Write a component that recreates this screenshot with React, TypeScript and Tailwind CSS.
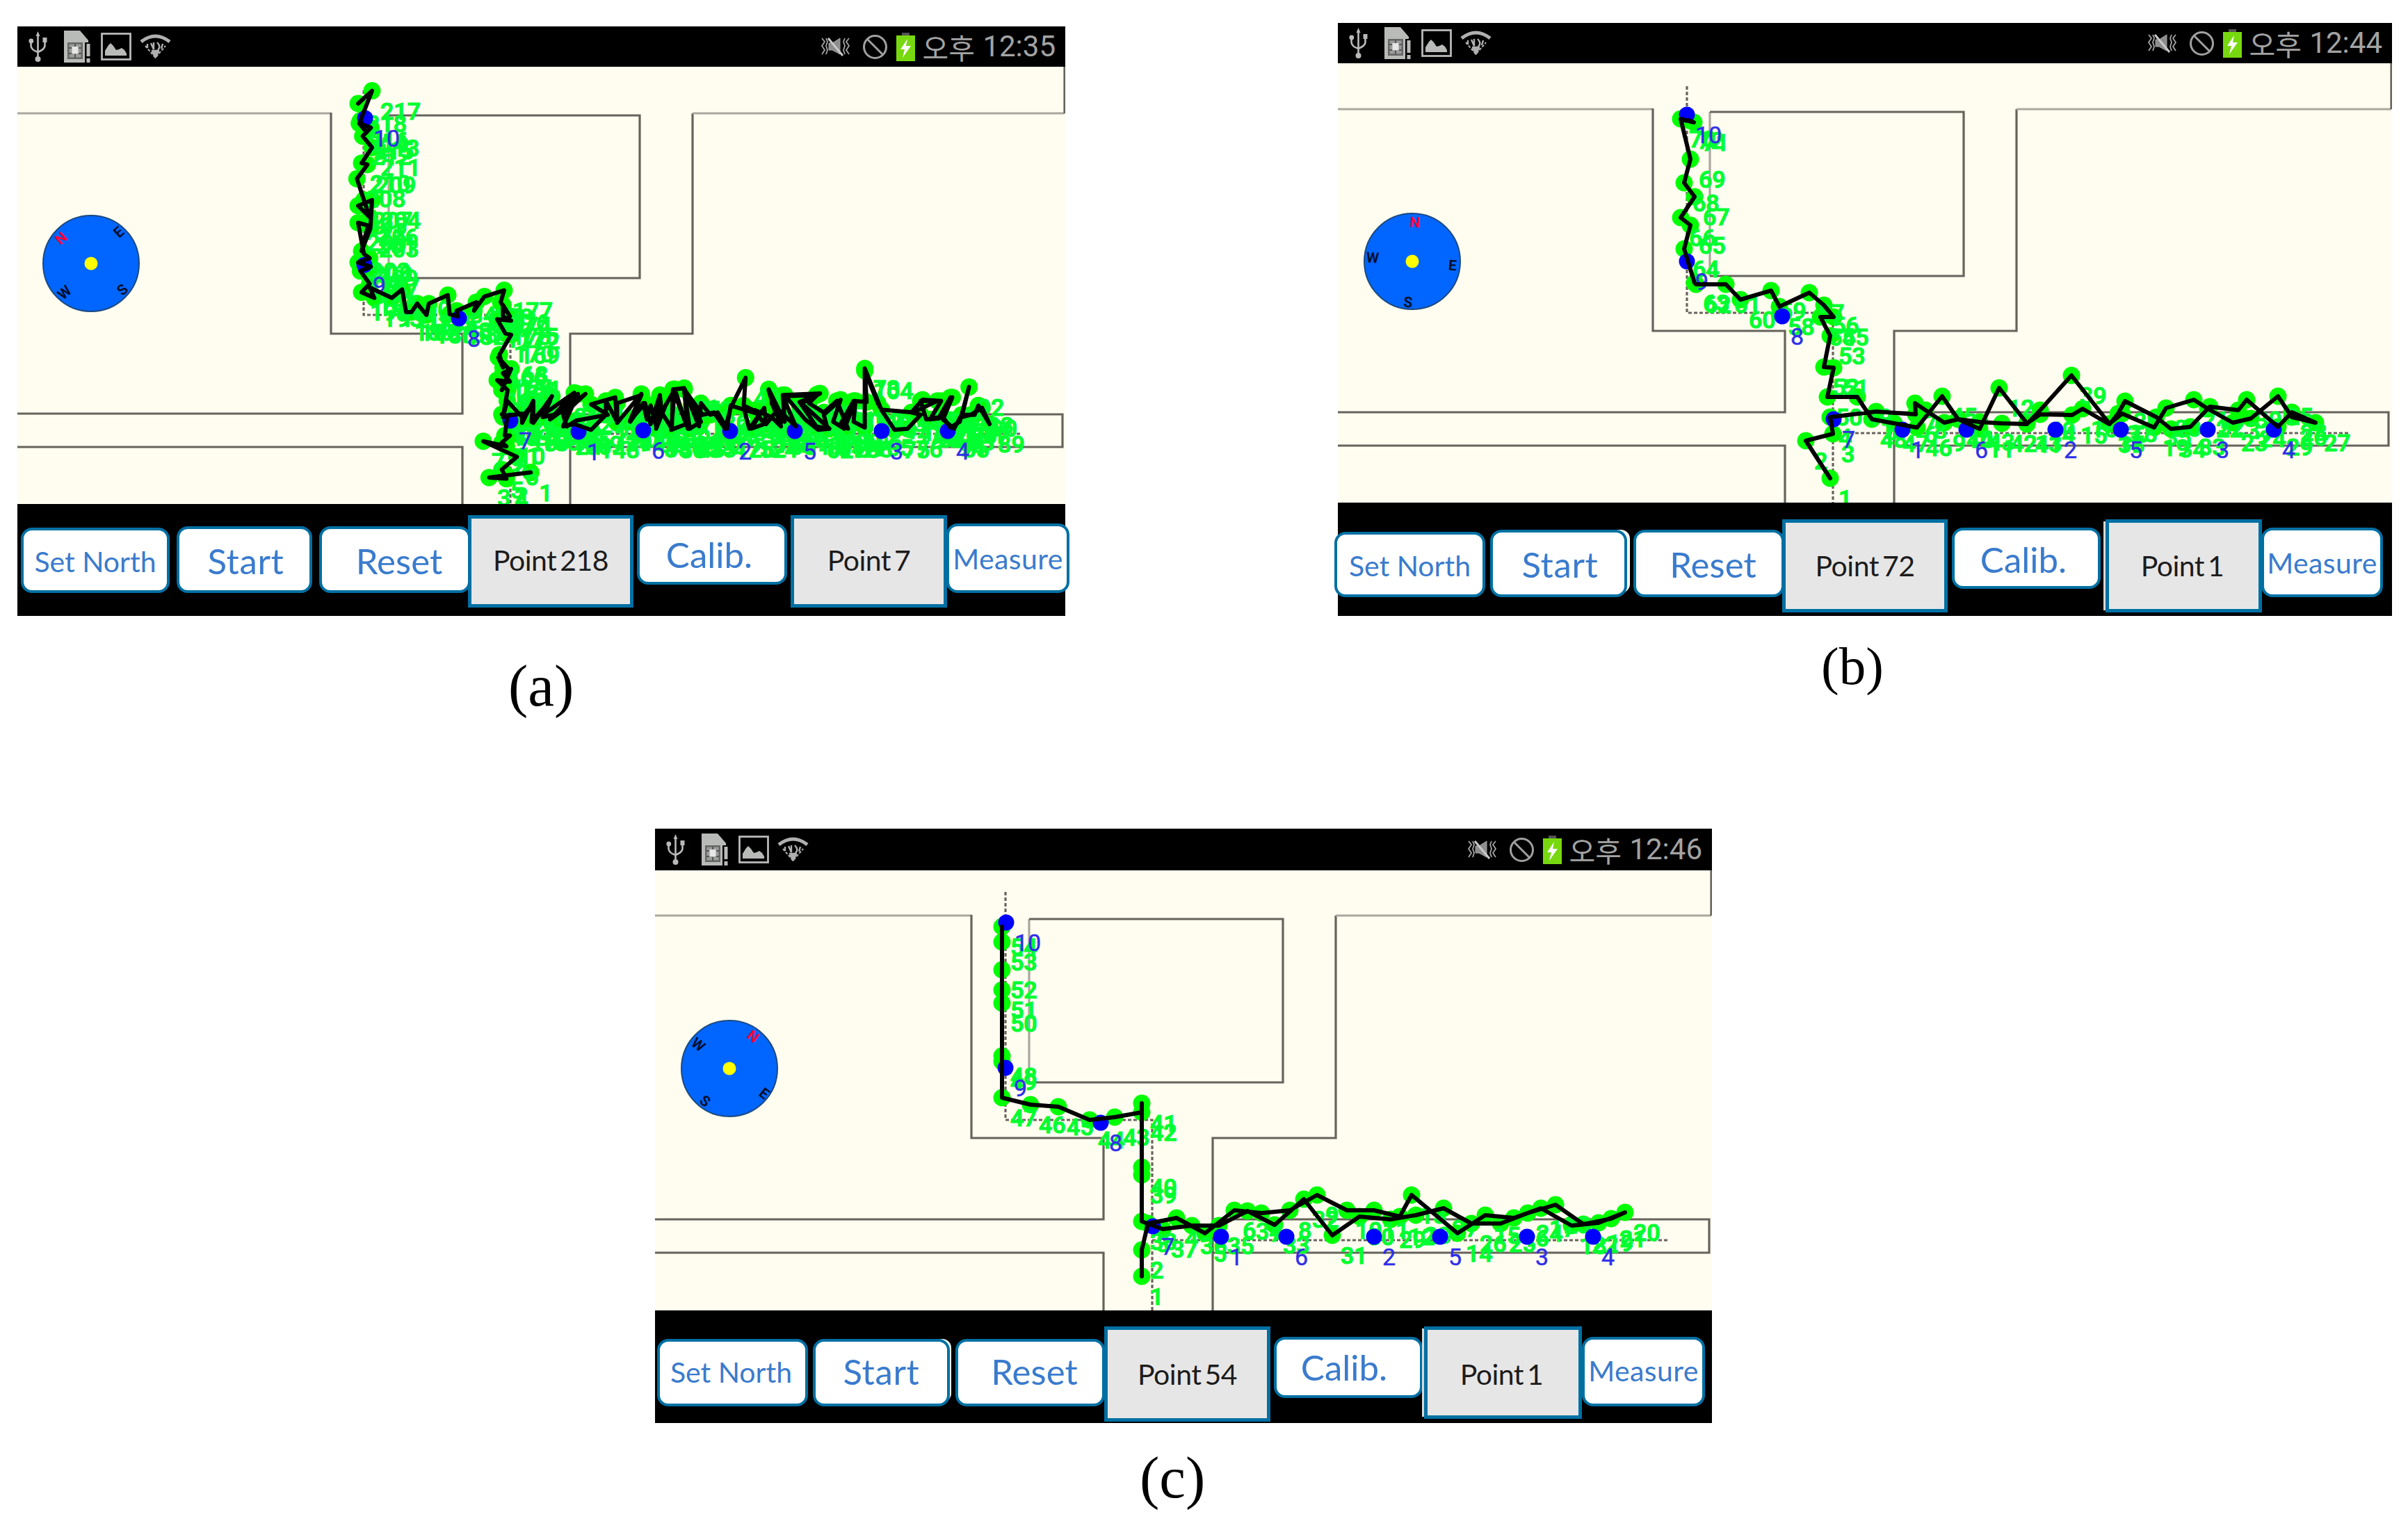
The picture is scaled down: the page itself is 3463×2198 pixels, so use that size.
import clsx from "clsx";

type Point = [number, number];

interface Wall {
  d: string;
  light?: boolean;
}

interface MapData {
  viewBox: string;
  walls: Wall[];
  dashed: string;
  track: Point[];
  count: number;
  beacons: [string, number, number][];
  compass: { x: number; y: number; angle: number; letters: [string, number, number][] };
}

interface BarButton {
  label: string;
  className: string;
}

// Section coordinates -> map coordinates
const section = (x0: number, y0: number, kx: number, ky: number, pts: Point[]): Point[] =>
  pts.map(([x, y]) => [x0 + x / kx, y0 + y / ky]);

const trackA: Point[] = [
  ...section(440, 100, 3, 2.45, [
    [970, 1420], [865, 1430], [790, 1438], [865, 1442], [845, 1410], [910, 1365], [765, 1310],
    [865, 1328], [845, 1315], [880, 1290], [858, 1290], [868, 1225], [845, 1215],
  ]),
  ...section(700, 480, 1.867, 3, [
    [50, 355], [95, 345], [95, 385], [125, 290], [125, 385], [175, 270], [150, 350], [235, 255],
    [170, 370], [265, 260], [205, 350], [215, 400], [240, 375], [325, 350], [280, 305], [345, 275],
    [350, 385], [415, 260], [385, 375], [425, 300], [440, 390], [465, 265], [455, 410], [480, 310],
    [505, 240], [495, 415], [535, 390], [505, 240], [530, 235], [575, 380], [545, 410], [530, 240],
    [580, 350], [610, 340], [640, 410], [655, 320], [695, 190], [690, 310], [735, 345], [710, 410],
    [745, 390], [720, 330], [765, 360], [790, 400], [757, 240], [800, 380], [795, 265], [895, 258],
    [845, 300], [920, 410], [890, 415], [855, 370], [800, 265], [890, 260], [865, 300], [905, 340],
    [940, 290], [970, 410], [950, 390], [985, 290], [1020, 295], [1015, 150], [1060, 330],
    [1095, 415], [1130, 410], [1165, 350], [1140, 340], [1170, 285], [1220, 290], [1190, 370],
    [1215, 365], [1250, 275], [1225, 370], [1255, 410], [1275, 350], [1310, 350], [1320, 310],
    [1350, 390], [1330, 320], [1300, 350], [1275, 360], [1295, 230], [1270, 380], [1245, 405],
    [1225, 360], [1245, 275], [1215, 360], [1180, 370], [1165, 290], [1210, 290], [1145, 340],
    [1060, 328], [1050, 300], [1015, 160], [1015, 405], [985, 380], [990, 290], [960, 410],
    [930, 380], [950, 285], [905, 350], [915, 410], [885, 400], [840, 295], [885, 265], [795, 270],
    [830, 400], [765, 300], [790, 385], [757, 245], [775, 340], [750, 390], [745, 320], [705, 410],
    [690, 320], [725, 345], [655, 310], [645, 410], [620, 340], [600, 350], [575, 300], [570, 400],
    [530, 240], [540, 410], [500, 240], [497, 410], [470, 340], [465, 270], [455, 400], [440, 310],
    [430, 370], [420, 300], [385, 380], [415, 265], [350, 300], [350, 380], [320, 290], [320, 350],
    [280, 415], [235, 390], [205, 400], [245, 260], [180, 350], [150, 360], [170, 290], [120, 380],
    [125, 300], [95, 360], [55, 290],
  ]),
  ...section(440, 100, 3, 2.45, [
    [850, 1225], [870, 1130], [825, 1095], [880, 1100], [850, 1070], [885, 1055], [845, 1130],
    [880, 1060], [830, 1015], [850, 1050], [835, 1005], [885, 935], [860, 930], [825, 880],
    [885, 885], [850, 870], [850, 830], [880, 870], [840, 820], [855, 778], [770, 800], [725, 850],
    [735, 820], [650, 850], [655, 870], [620, 862], [612, 795], [530, 825], [520, 865], [480, 825],
    [455, 855], [432, 855], [415, 775], [370, 805], [275, 768], [295, 805], [240, 785], [275, 755],
    [235, 710], [280, 695], [225, 680], [275, 665], [250, 650], [225, 540], [268, 550], [240, 640],
    [278, 560], [285, 460], [225, 480], [275, 520], [250, 460], [220, 385], [265, 335], [240, 330],
    [285, 275], [245, 235], [280, 205], [230, 190], [255, 215], [235, 180], [285, 75], [225, 120],
  ]),
];

const trackB: Point[] = [
  [2632, 688], [2597, 634], [2636, 624], [2632, 600], [2698, 592], [2755, 596], [2754, 580],
  [2769, 590], [2796, 608], [2816, 603], [2847, 617], [2875, 558], [2915, 609], [2934, 596],
  [2980, 597], [2995, 588], [3033, 610], [3052, 595], [3098, 615], [3115, 587], [3155, 575],
  [3175, 588], [3211, 608], [3237, 602], [3276, 570], [3296, 600], [3330, 608], [3296, 593],
  [3276, 614], [3231, 575], [3219, 590], [3178, 585], [3150, 614], [3122, 617], [3101, 600],
  [3056, 577], [3046, 595], [3034, 610], [2979, 540], [2934, 590], [2915, 610], [2879, 609],
  [2847, 607], [2816, 603], [2793, 570], [2757, 615], [2724, 609], [2692, 603], [2671, 571],
  [2628, 571], [2637, 529], [2623, 528], [2632, 483], [2618, 456], [2637, 456], [2623, 439],
  [2602, 421], [2559, 441], [2547, 418], [2503, 431], [2482, 409], [2439, 409], [2437, 407],
  [2422, 358], [2431, 324], [2417, 313], [2437, 283], [2422, 263], [2431, 229], [2417, 171],
  [2436, 176], [2429, 173],
];

const trackC: Point[] = [
  [1642, 1836], [1642, 1798], [1651, 1760], [1692, 1752], [1733, 1774], [1775, 1741], [1814, 1745],
  [1855, 1741], [1894, 1719], [1937, 1741], [1976, 1741], [2013, 1750], [2030, 1719], [2096, 1774],
  [2136, 1748], [2177, 1752], [2216, 1738], [2260, 1763], [2299, 1759], [2337, 1744], [2317, 1753],
  [2277, 1761], [2237, 1733], [2197, 1745], [2158, 1760], [2116, 1760], [2076, 1738], [2036, 1748],
  [2000, 1754], [1955, 1750], [1916, 1777], [1875, 1725], [1833, 1762], [1794, 1742], [1753, 1763],
  [1714, 1763], [1672, 1768], [1642, 1757], [1642, 1690], [1642, 1679], [1642, 1587], [1642, 1600],
  [1603, 1607], [1567, 1611], [1522, 1592], [1482, 1589], [1441, 1579], [1441, 1519], [1441, 1527],
  [1441, 1443], [1441, 1424], [1441, 1395], [1441, 1355], [1441, 1333],
];

const mapA: MapData = {
  viewBox: "25 96 1507 629",
  walls: [
    { d: "M25 163H476", light: true },
    { d: "M476 162V480H665V595H25" },
    { d: "M25 643H665V725" },
    { d: "M820 725V480H996V163" },
    { d: "M996 163H1531", light: true },
    { d: "M1531 96V163" },
    { d: "M820 596H1528V643H820" },
    { d: "M559 166V400", light: true },
    { d: "M559 166H920V400H559" },
  ],
  dashed: "M523 130V453H734V725M734 624H1470",
  track: trackA,
  count: 218,
  beacons: [
    ["10", 525, 170], ["9", 524, 381], ["8", 660, 458], ["7", 734, 605], ["1", 832, 621],
    ["6", 925, 619], ["2", 1050, 620], ["5", 1143, 620], ["3", 1268, 620], ["4", 1363, 620],
  ],
  compass: {
    x: 131, y: 379, angle: -42,
    letters: [["N", 88, 343], ["E", 171, 334], ["S", 176, 417], ["W", 93, 421]],
  },
};

const mapB: MapData = {
  viewBox: "1924 91 1516 632",
  walls: [
    { d: "M1924 157H2377", light: true },
    { d: "M2377 156V476H2567V593H1924" },
    { d: "M1924 641H2567V723" },
    { d: "M2724 723V476H2900V157" },
    { d: "M2900 157H3439", light: true },
    { d: "M3439 91V157" },
    { d: "M2724 593H3435V641H2724" },
    { d: "M2459 161V397", light: true },
    { d: "M2459 161H2824V397H2459" },
  ],
  dashed: "M2426 124V450H2636V723M2636 623H3378",
  track: trackB,
  count: 72,
  beacons: [
    ["10", 2426, 165], ["9", 2426, 376], ["8", 2563, 455], ["7", 2637, 603], ["1", 2736, 618],
    ["6", 2828, 618], ["2", 2956, 618], ["5", 3050, 618], ["3", 3175, 618], ["4", 3270, 618],
  ],
  compass: {
    x: 2031, y: 376, angle: 4,
    letters: [["N", 2035, 320], ["E", 2089, 382], ["S", 2025, 435], ["W", 1974, 371]],
  },
};

const mapC: MapData = {
  viewBox: "942 1252 1520 633",
  walls: [
    { d: "M942 1317H1397", light: true },
    { d: "M1397 1316V1637H1587V1754H942" },
    { d: "M942 1802H1587V1885" },
    { d: "M1744 1885V1637H1921V1317" },
    { d: "M1921 1317H2461", light: true },
    { d: "M2461 1252V1317" },
    { d: "M1744 1754H2458V1802H1744" },
    { d: "M1480 1322V1557", light: true },
    { d: "M1480 1322H1845V1557H1480" },
  ],
  dashed: "M1446 1283V1611H1657V1885M1657 1784H2399",
  track: trackC,
  count: 54,
  beacons: [
    ["10", 1447, 1327], ["9", 1446, 1536], ["8", 1583, 1615], ["7", 1658, 1764], ["1", 1756, 1779],
    ["6", 1850, 1779], ["2", 1976, 1779], ["5", 2071, 1779], ["3", 2196, 1779], ["4", 2291, 1779],
  ],
  compass: {
    x: 1049, y: 1537, angle: 38,
    letters: [["N", 1083, 1491], ["E", 1099, 1573], ["S", 1014, 1584], ["W", 1004, 1503]],
  },
};

const outlined =
  "rounded-[16px] border-[4px] border-[#0070a3] bg-white text-[#3a7bcd]";
const small = "text-[41px]";
const large = "text-[51px]";
const boxed =
  "border-[5px] border-[#0070a3] bg-[#e7e6e6] text-[#1c1c1c] text-[41px] tracking-[-0.5px] [word-spacing:-5px]";

const buttonsA: BarButton[] = [
  { label: "Set North", className: clsx(outlined, small, "ml-[5px] mt-[34px] h-[94px] w-[214px] pt-0.5") },
  { label: "Start", className: clsx(outlined, large, "ml-[10px] mt-8 h-24 w-[195px] pt-0.5 pl-1 tracking-[0.6px]") },
  { label: "Reset", className: clsx(outlined, large, "ml-[10px] mt-8 h-24 w-[218px] pt-0.5 pl-3") },
  { label: "Point 218", className: clsx(boxed, "-ml-1 mt-4 h-[133px] w-[238px] pb-1") },
  { label: "Calib.", className: clsx(outlined, large, "ml-[5px] mt-7 h-[88px] w-[216px] pr-2") },
  { label: "Point 7", className: clsx(boxed, "ml-[5px] mt-4 h-[133px] w-[225px] pb-1") },
  { label: "Measure", className: clsx(outlined, small, "-ml-px mt-7 h-[100px] w-[177px] tracking-[0.4px]") },
];

const buttonsB: BarButton[] = [
  { label: "Set North", className: clsx(outlined, small, "-ml-[5px] mt-[42px] h-[94px] w-[217px] pt-0.5") },
  { label: "Start", className: clsx(outlined, large, "ml-[7px] mt-[39px] h-[97px] w-[197px] pt-0.5 pl-1 tracking-[0.6px] shadow-[7px_-3px_0_-3px_white]") },
  { label: "Reset", className: clsx(outlined, large, "ml-[9px] mt-[39px] h-[97px] w-[217px] pt-0.5 pl-3") },
  { label: "Point 72", className: clsx(boxed, "-ml-[3px] mt-6 h-[134px] w-[238px] pb-0.5") },
  { label: "Calib.", className: clsx(outlined, large, "ml-1.5 mt-9 h-[88px] w-[214px] pt-0.5 pr-2") },
  { label: "Point 1", className: clsx(boxed, "ml-[7px] mt-6 h-[134px] w-[225px] pb-0.5 pr-1 shadow-[-6px_0_0_-3px_#d8d8d8]") },
  { label: "Measure", className: clsx(outlined, small, "-ml-px mt-9 h-[100px] w-[175px] tracking-[0.4px]") },
];

const buttonsC: BarButton[] = [
  { label: "Set North", className: clsx(outlined, small, "ml-[3px] mt-[41px] h-[97px] w-[217px] pb-0.5 pr-1") },
  { label: "Start", className: clsx(outlined, large, "ml-[7px] mt-[41px] h-[97px] w-[197px] pb-1 tracking-[0.6px] shadow-[5px_-3px_0_-3px_white]") },
  { label: "Reset", className: clsx(outlined, large, "ml-2 mt-[41px] h-[97px] w-[215px] pb-1 pl-3") },
  { label: "Point 54", className: clsx(boxed, "-ml-px mt-[23px] h-[137px] w-[239px]") },
  { label: "Calib.", className: clsx(outlined, large, "ml-[5px] mt-[38px] h-[88px] w-[214px] pb-0.5 pr-3") },
  { label: "Point 1", className: clsx(boxed, "ml-0.5 mt-[23px] h-[133px] w-[227px] pt-1 pr-1 shadow-[-6px_0_0_-3px_#d8d8d8]") },
  { label: "Measure", className: clsx(outlined, small, "mt-[38px] h-[100px] w-[177px] pb-1 tracking-[0.4px]") },
];

function UsbIcon() {
  return (
    <svg viewBox="0 0 27 46" className="h-[46px] w-[27px]" fill="#b9b9b9" stroke="#b9b9b9">
      <path d="M13.5 6V40M3.5 16V22Q4 28 13.5 31M23.5 14V22Q23 27 13.5 31" fill="none" strokeWidth="2.600" />
      <path d="M13.5 1l3 7h-6z" stroke="none" />
      <circle cx="3.800" cy="15" r="3.400" stroke="none" />
      <rect x="20.500" y="10" width="6" height="7" stroke="none" />
      <circle cx="13.500" cy="41" r="4" stroke="none" />
    </svg>
  );
}

function SimIcon() {
  return (
    <svg viewBox="0 0 40 48" className="h-12 w-10">
      <path d="M1 1H24L36 15V18H31V47H1Z" fill="#b9bbb8" />
      <rect x="6" y="18" width="22" height="24" fill="#666" />
      <rect x="8.500" y="20.500" width="17" height="19" fill="#9a9c99" />
      <path d="M17 20v4M17 35v5M8 26h4M8 34h4M22 26h4M22 34h4" stroke="#555" strokeWidth="2" />
      <rect x="12.500" y="24" width="9" height="10" fill="#e6e6e6" />
      <path d="M36 20V38M36 41V47" stroke="#b9bbb8" strokeWidth="5" />
    </svg>
  );
}

function PictureIcon() {
  return (
    <svg viewBox="0 0 44 40" className="h-10 w-11">
      <rect x="1.500" y="1.500" width="41" height="37" fill="none" stroke="#b9b9b9" strokeWidth="2.800" />
      <path d="M6 33V26L11 18L14 15L18 19L22 25L26 24L30 22L34 25L37 30V33Z" fill="#b9bbb8" />
    </svg>
  );
}

function WifiIcon() {
  return (
    <svg viewBox="0 0 45 36" className="h-9 w-[45px]" fill="none" stroke="#b0b0b0">
      <path d="M2 11Q22.500 -5 43 11" strokeWidth="5" />
      <path d="M8 17L22.500 34L37 17" strokeWidth="2" strokeDasharray="4 2" />
      <path d="M11 14V20M16 13L20 22V12M25 12Q31 18 26 23M33 14L31 21M17 24H28" strokeWidth="2.400" />
      <path d="M17 25L22.500 35L28 25" fill="#b0b0b0" strokeWidth="1" />
    </svg>
  );
}

function MuteIcon() {
  return (
    <svg viewBox="0 0 43 32" className="h-8 w-[43px]" fill="none" stroke="#a5a5a5">
      <path d="M2 4l4 5-4 6 4 6-4 6M8 4l2 5-2 6 2 6-2 6M41 4l-4 5 4 6-4 6 4 6M35 4l-2 5 2 6-2 6 2 6" strokeWidth="1.800" />
      <path d="M12 11H17L28 4V27L17 21H12Z" fill="#8c8c8c" strokeWidth="1" />
      <path d="M11 4L32 29" stroke="#c9c9c9" strokeWidth="3" />
    </svg>
  );
}

function BlockIcon() {
  return (
    <svg viewBox="0 0 37 37" className="size-[37px]" fill="none" stroke="#a0a0a0" strokeWidth="3">
      <circle cx="18.500" cy="18.500" r="16" />
      <path d="M7.500 7.500L29.500 29.500" />
    </svg>
  );
}

function BatteryIcon() {
  return (
    <svg viewBox="0 0 27 41" className="h-[41px] w-[27px]">
      <rect x="8" y="0" width="11" height="5" fill="#555" />
      <rect x="0" y="4" width="27" height="37" fill="#77d810" />
      <path d="M16 9L6 24H12L9 36L21 19H14Z" fill="white" />
    </svg>
  );
}

function StatusBar({ time, className }: { time: string; className: string }) {
  return (
    <div className={clsx("flex items-center justify-between bg-black pl-4 pr-[14px]", className)}>
      <div className="flex items-center">
        <UsbIcon />
        <div className="ml-[23px]"><SimIcon /></div>
        <div className="ml-[14px]"><PictureIcon /></div>
        <div className="ml-3"><WifiIcon /></div>
      </div>
      <div className="flex items-center">
        <MuteIcon />
        <div className="ml-[17px]"><BlockIcon /></div>
        <div className="ml-3"><BatteryIcon /></div>
        <div className="ml-2.5 flex items-center leading-none text-[#a3a3a3]">
          <span className="w-[87px] font-['Noto_Sans_CJK_KR',sans-serif] text-[41px]">오후</span>
          <span className="font-[Roboto,sans-serif] text-[42px]">{time}</span>
        </div>
      </div>
    </div>
  );
}

function FloorMap({ map, className }: { map: MapData; className: string }) {
  const last = map.track.length - 1;
  const line = map.track.map((p) => p.join(",")).join(" ");
  return (
    <svg viewBox={map.viewBox} className={clsx("block bg-[#fffdf0] font-[Roboto,sans-serif]", className)}>
      <g fill="none" strokeWidth="3.200">
        {map.walls.map((wall) => (
          <path key={wall.d} d={wall.d} stroke={wall.light ? "#aaa79f" : "#66635c"} />
        ))}
        <path d={map.dashed} stroke="#6a645e" strokeDasharray="5 3" />
      </g>

      {/* Compass */}
      <circle cx={map.compass.x} cy={map.compass.y} r="69" fill="#0066ff" stroke="#1c4a80" strokeWidth="2" />
      <circle cx={map.compass.x} cy={map.compass.y} r="9.500" fill="#ffff00" />
      {map.compass.letters.map(([letter, x, y]) => (
        <text
          key={letter}
          x={x}
          y={y + 7}
          textAnchor="middle"
          fontSize="21"
          fontWeight="700"
          fill={letter === "N" ? "#ff0033" : "#001030"}
          transform={`rotate(${map.compass.angle} ${x} ${y})`}
        >
          {letter}
        </text>
      ))}

      {/* Estimated positions */}
      <g fill="#00ff00">
        {map.track.map(([x, y], i) => (
          <circle key={i} cx={x} cy={y} r="12.500" />
        ))}
      </g>
      <g fill="#00ff30" stroke="#00ff30" strokeWidth="1.200" fontSize="34" fontWeight="500">
        {map.track.map(([x, y], i) => (
          <text key={i} x={x + 12} y={y + 41}>
            {1 + Math.round((i * (map.count - 1)) / last)}
          </text>
        ))}
      </g>

      {/* Reference points */}
      {map.beacons.map(([name, x, y]) => (
        <g key={name}>
          <circle cx={x} cy={y} r="11.500" fill="#0000ff" />
          <text x={x + 12} y={y + 41} fontSize="34" fill="#2f2fe8" stroke="#2f2fe8" strokeWidth="0.500">
            {name}
          </text>
        </g>
      ))}
      <polyline points={line} fill="none" stroke="black" strokeWidth="6" strokeLinejoin="round" strokeLinecap="round" />
    </svg>
  );
}

function ButtonBar({ buttons, className }: { buttons: BarButton[]; className: string }) {
  return (
    <div className={clsx("flex items-start bg-black font-[Lato,sans-serif]", className)}>
      {buttons.map((button) => (
        <button
          key={button.label}
          className={clsx("flex shrink-0 items-center justify-center whitespace-nowrap leading-none", button.className)}
        >
          {button.label}
        </button>
      ))}
    </div>
  );
}

export default function App() {
  return (
    <main className="h-[2198px] w-[3463px] overflow-hidden bg-white">
      <div className="flex h-[1192px] items-start pl-[25px]">
        <figure className="w-[1507px] pt-[38px]">
          <StatusBar time="12:35" className="h-[58px]" />
          <FloorMap map={mapA} className="h-[629px] w-[1507px]" />
          <ButtonBar buttons={buttonsA} className="h-[161px]" />
          <figcaption className="mt-[52px] pl-[706px] font-['Liberation_Serif',serif] text-[85px] leading-[96px]">
            (a)
          </figcaption>
        </figure>
        <figure className="ml-[392px] w-[1516px] pt-[33px]">
          <StatusBar time="12:44" className="h-[58px]" />
          <FloorMap map={mapB} className="h-[632px] w-[1516px]" />
          <ButtonBar buttons={buttonsB} className="h-[163px]" />
          <figcaption className="mt-[28px] pl-[695px] font-['Liberation_Serif',serif] text-[77px] leading-[88px]">
            (b)
          </figcaption>
        </figure>
      </div>
      <figure className="ml-[942px] w-[1520px]">
        <StatusBar time="12:46" className="h-[60px]" />
        <FloorMap map={mapC} className="h-[633px] w-[1520px]" />
        <ButtonBar buttons={buttonsC} className="h-[162px]" />
        <figcaption className="mt-[30px] pl-[697px] font-['Liberation_Serif',serif] text-[85px] leading-[96px]">
          (c)
        </figcaption>
      </figure>
    </main>
  );
}
